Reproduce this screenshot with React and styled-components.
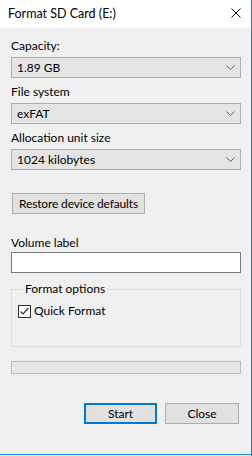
import React from "react";
import styled, { createGlobalStyle } from "styled-components";

const GlobalStyle = createGlobalStyle`
  html, body {
    margin: 0;
    padding: 0;
    background: #f0f0f0;
  }
  * {
    box-sizing: border-box;
  }
`;

const Window = styled.div`
  width: 252px;
  height: 456px;
  display: flex;
  flex-direction: column;
  background: #f0f0f0;
  border-right: 1px solid #1a7fd4;
  font-family: Lato, "Noto Sans", sans-serif;
  font-size: 12px;
  color: #000;
  overflow: hidden;
`;

const TitleBar = styled.div`
  height: 28px;
  flex: none;
  display: flex;
  align-items: center;
  justify-content: space-between;
  background: #fff;
  padding: 0 10px 0 8px;
`;

const Title = styled.div`
  font-size: 12.5px;
  line-height: 16px;
`;

const CloseGlyph = styled.svg`
  width: 10px;
  height: 10px;
  margin-bottom: 2px;
`;

const Content = styled.div`
  flex: 1;
  display: flex;
  flex-direction: column;
  padding: 10px 10px 0 11px;
  border-bottom: 1px solid #1a7fd4;
  margin-bottom: 1px;
`;

const Label = styled.div`
  line-height: 16px;
  height: 16px;
  margin-top: ${(p) => p.$top || 0}px;
`;

const SelectBox = styled.div`
  height: 21px;
  margin-top: 3px;
  display: flex;
  align-items: center;
  justify-content: space-between;
  padding: 0 5px 0 5px;
  background: #e5e5e5;
  border: 1px solid #acacac;
  line-height: 16px;
`;

const Chevron = styled.svg`
  width: 9px;
  height: 5px;
`;

const Button = styled.div`
  height: 21px;
  width: ${(p) => p.$width}px;
  display: flex;
  align-items: center;
  justify-content: center;
  background: #e1e1e1;
  border: ${(p) => (p.$primary ? "2px solid #0078d7" : "1px solid #adadad")};
  line-height: 16px;
  letter-spacing: ${(p) => (p.$tight ? "-0.15px" : "0")};
`;

const RestoreRow = styled.div`
  margin-top: 23px;
  padding-left: 1px;
`;

const TextInput = styled.div`
  height: 21px;
  margin-top: 1px;
  background: #fff;
  border: 1px solid #7a7a7a;
`;

const GroupBox = styled.fieldset`
  margin: 8px 0 0 0;
  padding: 6px 6px 0 6px;
  height: 66px;
  border: 1px solid #dcdcdc;
  border-radius: 0;
`;

const Legend = styled.legend`
  padding: 0 2px;
  margin-left: 5px;
  line-height: 16px;
`;

const CheckRow = styled.div`
  display: flex;
  align-items: center;
  gap: 3px;
  line-height: 16px;
`;

const CheckBox = styled.div`
  width: 13px;
  height: 13px;
  border: 1px solid #333;
  background: #fff;
  display: flex;
  align-items: center;
  justify-content: center;
`;

const Progress = styled.div`
  height: 13px;
  margin-top: 14px;
  background: #e6e6e6;
  border: 1px solid #bcbcbc;
`;

const ButtonRow = styled.div`
  display: flex;
  justify-content: flex-end;
  gap: 8px;
  margin-top: 29px;
  padding-right: 2px;
`;

const Dropdown = ({ value }) => (
  <SelectBox>
    <span>{value}</span>
    <Chevron viewBox="0 0 9 5">
      <polyline points="0.5,0.5 4.5,4.5 8.5,0.5" fill="none" stroke="#606060" strokeWidth="1" />
    </Chevron>
  </SelectBox>
);

export default function App() {
  return (
    <>
      <GlobalStyle />
      <Window>
        <TitleBar>
          <Title>Format SD Card (E:)</Title>
          <CloseGlyph viewBox="0 0 10 10">
            <path d="M0.5 0.5 L9.5 9.5 M9.5 0.5 L0.5 9.5" stroke="#111" strokeWidth="1" fill="none" />
          </CloseGlyph>
        </TitleBar>
        <Content>
          <Label>Capacity:</Label>
          <Dropdown value="1.89 GB" />
          <Label $top={6}>File system</Label>
          <Dropdown value="exFAT" />
          <Label $top={6}>Allocation unit size</Label>
          <Dropdown value="1024 kilobytes" />
          <RestoreRow>
            <Button $width={133} $tight>
              Restore device defaults
            </Button>
          </RestoreRow>
          <Label $top={21}>Volume label</Label>
          <TextInput />
          <GroupBox>
            <Legend>Format options</Legend>
            <CheckRow>
              <CheckBox>
                <svg width="11" height="11" viewBox="0 0 11 11">
                  <polyline points="1.5,5.5 4,8 9.5,2" fill="none" stroke="#333" strokeWidth="1.2" />
                </svg>
              </CheckBox>
              <span>Quick Format</span>
            </CheckRow>
          </GroupBox>
          <Progress />
          <ButtonRow>
            <Button $width={73} $primary>
              Start
            </Button>
            <Button $width={74}>Close</Button>
          </ButtonRow>
        </Content>
      </Window>
    </>
  );
}
